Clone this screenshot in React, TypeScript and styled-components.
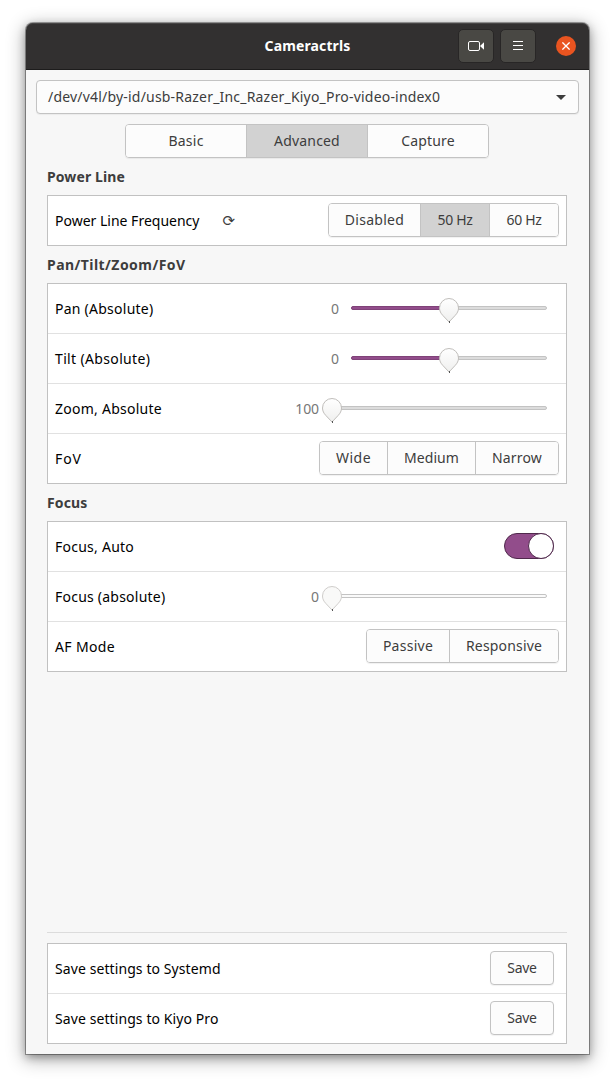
import React from 'react';
import styled, { createGlobalStyle } from 'styled-components';

const GlobalStyle = createGlobalStyle`
  *, *::before, *::after { box-sizing: border-box; }
  body {
    margin: 0;
    background: #fff;
    color: #3d3d3d;
    font: 14px/20px "Noto Sans", "DejaVu Sans", sans-serif;
  }
  button { font: inherit; color: inherit; padding: 0; margin: 0; }
`;

const Desktop = styled.div`
  height: 1083px;
  padding: 23px 26px 29px;
  overflow: hidden;
`;

const Window = styled.div`
  display: flex;
  flex-direction: column;
  height: 1031px;
  background: #f7f7f7;
  border-radius: 7px 7px 0 0;
  box-shadow:
    0 0 0 1px rgba(0, 0, 0, 0.33),
    0 3px 8px rgba(0, 0, 0, 0.3),
    0 4px 18px 2px rgba(0, 0, 0, 0.3);
`;

const HeaderBar = styled.header`
  display: grid;
  grid-template-columns: 1fr auto 1fr;
  align-items: center;
  height: 47px;
  padding: 0 13px;
  background: #323030;
  border-bottom: 1px solid #1d1c1c;
  border-radius: 7px 7px 0 0;
  box-shadow: inset 0 1px #474545;
`;

const Title = styled.h1`
  grid-column: 2;
  margin: 0;
  font-size: 14px;
  line-height: 20px;
  letter-spacing: 0.12px;
  color: #fff;
`;

const HeaderActions = styled.div`
  display: flex;
  justify-content: flex-end;
  align-items: center;
  gap: 6px;
`;

const HeaderButton = styled.button`
  display: grid;
  place-items: center;
  width: 36px;
  height: 34px;
  color: #fff;
  background: #494844;
  border: 1px solid #282626;
  border-radius: 5px;
`;

const CloseButton = styled.button`
  display: grid;
  place-items: center;
  width: 20px;
  height: 20px;
  margin-left: 14px;
  background: #e95420;
  border: 0;
  border-radius: 50%;
`;

const Content = styled.main`
  display: flex;
  flex-direction: column;
  flex: 1;
  padding: 10px 10px 10px;
`;

const DeviceSelect = styled.button`
  display: flex;
  align-items: center;
  justify-content: space-between;
  height: 34px;
  padding: 0 12px 0 11px;
  letter-spacing: 0.197px;
  background: #fcfcfc;
  border: 1px solid #c3c3c3;
  border-radius: 4px;
  box-shadow: 0 1px 1px rgba(0, 0, 0, 0.05);
`;

const ButtonGroup = styled.div`
  display: flex;
  height: 34px;
  border: 1px solid #c3c3c3;
  border-radius: 4px;
  box-shadow: 0 1px 1px rgba(0, 0, 0, 0.06);
  overflow: hidden;
`;

const Segment = styled.button<{ $width: number; $spacing?: number; $active?: boolean }>`
  width: ${p => p.$width}px;
  letter-spacing: ${p => p.$spacing ?? 0}px;
  background: ${p => (p.$active ? '#d2d2d2' : '#fcfcfc')};
  border: 0;
  & + & { border-left: 1px solid #c3c3c3; }
`;

const Tabs = styled(ButtonGroup)`
  align-self: center;
  margin: 10px 1px 0 0;
`;

const Section = styled.section`
  display: flex;
  flex-direction: column;
  margin: 9px 12px 0 11px;
`;

const SectionTitle = styled.h2<{ $spacing: number }>`
  margin: 0 0 8px;
  font-size: 14px;
  line-height: 20px;
  letter-spacing: ${p => p.$spacing}px;
`;

const Panel = styled.div`
  background: #fff;
  border: 1px solid #c1c1c1;
`;

const Row = styled.div`
  display: flex;
  align-items: center;
  height: 50px;
  padding-left: 7px;
  border-bottom: 1px solid #e1e1e1;
  &:last-child { height: 49px; border-bottom: 0; }
`;

const Label = styled.span<{ $spacing: number }>`
  padding-top: 1px;
  letter-spacing: ${p => p.$spacing}px;
  color: #000;
  white-space: nowrap;
`;

const ResetButton = styled.button`
  margin: 0 0 1px 23px;
  font-size: 15px;
  background: none;
  border: 0;
`;

const Control = styled.div<{ $end?: number }>`
  display: flex;
  align-items: center;
  margin: 0 ${p => p.$end ?? 7}px 1px auto;
`;

const SliderValue = styled.span<{ $spacing?: number; $gap: number }>`
  margin-right: ${p => p.$gap}px;
  padding-top: 2px;
  letter-spacing: ${p => p.$spacing ?? 0}px;
  color: #777;
`;

const Track = styled.div<{ $width: number; $disabled?: boolean }>`
  position: relative;
  width: ${p => p.$width}px;
  height: 4px;
  background: ${p => (p.$disabled ? '#fafafa' : '#dcdcdc')};
  border: 1px solid #c3c3c3;
  border-radius: 2px;
`;

const Fill = styled.div`
  position: absolute;
  inset: -1px 50% -1px -1px;
  background: #924d8b;
  border: 1px solid #804379;
  border-radius: 2px 0 0 2px;
`;

const Thumb = styled.svg<{ $middle?: boolean }>`
  position: absolute;
  top: -9px;
  left: ${p => (p.$middle ? 'calc(50% - 10px)' : '-11px')};
`;

const Switch = styled.button`
  display: flex;
  justify-content: flex-end;
  width: 50px;
  height: 26px;
  background: #924d8b;
  border: 1px solid #50294c;
  border-radius: 13px;
`;

const SwitchKnob = styled.span`
  width: 26px;
  height: 26px;
  margin: -1px;
  background: #fff;
  border: 1px solid #50294c;
  border-radius: 50%;
`;

const SaveButton = styled.button`
  width: 64px;
  height: 34px;
  letter-spacing: -0.3px;
  background: #fcfcfc;
  border: 1px solid #c3c3c3;
  border-radius: 4px;
  box-shadow: 0 1px 1px rgba(0, 0, 0, 0.06);
`;

const Footer = styled.footer`
  margin: auto 12px 0 11px;
  padding-top: 10px;
  border-top: 1px solid #dcdcdc;
`;

type SliderProps = { value: string; width: number; middle?: boolean; disabled?: boolean; spacing?: number };

function Slider({ value, width, middle, disabled, spacing }: SliderProps) {
  return (
    <Control $end={19}>
      <SliderValue $spacing={spacing} $gap={middle ? 12 : 13}>{value}</SliderValue>
      <Track $width={width} $disabled={disabled}>
        {middle && <Fill />}
        <Thumb $middle={middle} width="20" height="26" viewBox="0 0 20 26">
          <defs>
            <linearGradient id="thumb" x1="0" y1="0" x2="0" y2="1">
              <stop offset="0" stopColor="#fff" />
              <stop offset="1" stopColor="#efefee" />
            </linearGradient>
          </defs>
          <path
            d="M10 .5A9.5 9.5 0 0 1 19.5 10C19.5 13 18.2 15.3 16.2 17.4L10 24 3.8 17.4C1.8 15.3 .5 13 .5 10A9.5 9.5 0 0 1 10 .5Z"
            fill={disabled ? '#f9f9f8' : 'url(#thumb)'}
            stroke={disabled ? '#cfcdcb' : '#c0bebb'}
          />
          <path d="M10.5 23v2" stroke="#555" strokeWidth="1" />
        </Thumb>
      </Track>
    </Control>
  );
}

export default function App() {
  return (
    <Desktop>
      <GlobalStyle />
      <Window>
        <HeaderBar>
          <Title>Cameractrls</Title>
          <HeaderActions>
            <HeaderButton aria-label="Camera preview">
              <svg width="18" height="12" viewBox="0 0 18 12">
                <rect x="1.5" y="1.5" width="11" height="9" rx="1.5" fill="none" stroke="currentColor" />
                <path d="M13 6l4-3.7v7.4z" fill="currentColor" />
              </svg>
            </HeaderButton>
            <HeaderButton aria-label="Menu">
              <svg width="10" height="10" viewBox="0 0 10 10">
                <path d="M0 .5h10M0 4.5h10M0 8.5h10" stroke="currentColor" />
              </svg>
            </HeaderButton>
            <CloseButton aria-label="Close">
              <svg width="8" height="8" viewBox="0 0 8 8">
                <path d="M.4.4l7.2 7.2M7.6.4L.4 7.6" stroke="#fff" strokeWidth="1.3" />
              </svg>
            </CloseButton>
          </HeaderActions>
        </HeaderBar>
        <Content>
          <DeviceSelect>
            /dev/v4l/by-id/usb-Razer_Inc_Razer_Kiyo_Pro-video-index0
            <svg width="10" height="5" viewBox="0 0 10 5">
              <path d="M0 0h10L5 5z" fill="#3d3d3d" />
            </svg>
          </DeviceSelect>
          <Tabs>
            <Segment $width={120} $spacing={0.25}>Basic</Segment>
            <Segment $width={121} $spacing={0.17} $active>Advanced</Segment>
            <Segment $width={121} $spacing={0.13}>Capture</Segment>
          </Tabs>
          <Section>
            <SectionTitle $spacing={0.1}>Power Line</SectionTitle>
            <Panel>
              <Row>
                <Label $spacing={0}>Power Line Frequency</Label>
                <ResetButton aria-label="Reset">⟳</ResetButton>
                <Control>
                  <ButtonGroup>
                    <Segment $width={91} $spacing={0.28}>Disabled</Segment>
                    <Segment $width={69} $spacing={-0.35} $active>50 Hz</Segment>
                    <Segment $width={69} $spacing={-0.35}>60 Hz</Segment>
                  </ButtonGroup>
                </Control>
              </Row>
            </Panel>
          </Section>
          <Section>
            <SectionTitle $spacing={0.449}>Pan/Tilt/Zoom/FoV</SectionTitle>
            <Panel>
              <Row>
                <Label $spacing={0.25}>Pan (Absolute)</Label>
                <Slider value="0" width={196} middle />
              </Row>
              <Row>
                <Label $spacing={0.35}>Tilt (Absolute)</Label>
                <Slider value="0" width={196} middle />
              </Row>
              <Row>
                <Label $spacing={0.25}>Zoom, Absolute</Label>
                <Slider value="100" width={215} spacing={-0.1} />
              </Row>
              <Row>
                <Label $spacing={0.9}>FoV</Label>
                <Control>
                  <ButtonGroup>
                    <Segment $width={67} $spacing={0.5}>Wide</Segment>
                    <Segment $width={88} $spacing={0.1}>Medium</Segment>
                    <Segment $width={83} $spacing={0.2}>Narrow</Segment>
                  </ButtonGroup>
                </Control>
              </Row>
            </Panel>
          </Section>
          <Section>
            <SectionTitle $spacing={0.135}>Focus</SectionTitle>
            <Panel>
              <Row>
                <Label $spacing={0.25}>Focus, Auto</Label>
                <Control $end={12}>
                  <Switch role="switch" aria-checked="true" aria-label="Focus, Auto">
                    <SwitchKnob />
                  </Switch>
                </Control>
              </Row>
              <Row>
                <Label $spacing={0.23}>Focus (absolute)</Label>
                <Slider value="0" width={215} disabled />
              </Row>
              <Row>
                <Label $spacing={0.36}>AF Mode</Label>
                <Control>
                  <ButtonGroup>
                    <Segment $width={82} $spacing={0.27}>Passive</Segment>
                    <Segment $width={109} $spacing={0.17}>Responsive</Segment>
                  </ButtonGroup>
                </Control>
              </Row>
            </Panel>
          </Section>
          <Footer>
            <Panel>
              <Row>
                <Label $spacing={0.09}>Save settings to Systemd</Label>
                <Control $end={12}><SaveButton>Save</SaveButton></Control>
              </Row>
              <Row>
                <Label $spacing={0.09}>Save settings to Kiyo Pro</Label>
                <Control $end={12}><SaveButton>Save</SaveButton></Control>
              </Row>
            </Panel>
          </Footer>
        </Content>
      </Window>
    </Desktop>
  );
}
